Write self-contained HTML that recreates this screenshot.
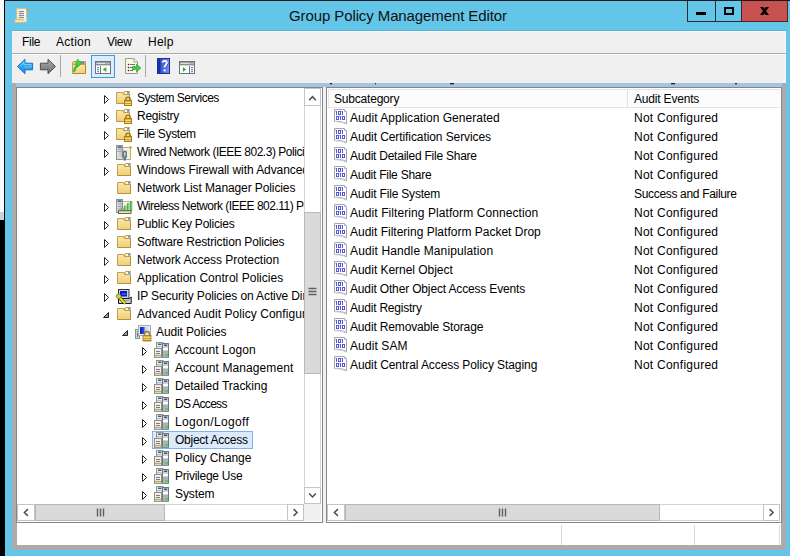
<!DOCTYPE html>
<html><head><meta charset="utf-8">
<style>
*{margin:0;padding:0;box-sizing:border-box}
html,body{width:790px;height:556px;overflow:hidden;background:#000}
body{position:relative;font-family:"Liberation Sans",sans-serif;font-size:12px;color:#000}
.a{position:absolute}
.t{position:absolute;white-space:nowrap;line-height:18px;height:18px}
svg{position:absolute;overflow:visible}
</style></head><body>

<svg width="0" height="0" style="position:absolute">
<defs>
 <linearGradient id="gFold" x1="0" y1="0" x2="0" y2="1"><stop offset="0" stop-color="#fbe7a9"/><stop offset="1" stop-color="#f0cf78"/></linearGradient>
 <linearGradient id="gLock" x1="0" y1="0" x2="0" y2="1"><stop offset="0" stop-color="#e9c04a"/><stop offset="1" stop-color="#b8860b"/></linearGradient>
 <linearGradient id="gScreen" x1="0" y1="0" x2="1" y2="0"><stop offset="0" stop-color="#0a1fc8"/><stop offset="0.45" stop-color="#2a50e0"/><stop offset="0.55" stop-color="#b9d4f4"/><stop offset="1" stop-color="#dce9f8"/></linearGradient>
 <linearGradient id="gCab" x1="0" y1="0" x2="1" y2="0"><stop offset="0" stop-color="#e6e9ec"/><stop offset="1" stop-color="#b8bec4"/></linearGradient>
 </defs></svg>

<!-- outside strip -->
<div class="a" style="left:0;top:0;width:4px;height:212px;background:#f9f9f9"></div>
<div class="a" style="left:0;top:212px;width:4px;height:8px;background:#c5d5db"></div>
<!-- window frame -->
<div class="a" style="left:5px;top:1px;width:785px;height:555px;background:#63c6e8"></div>

<!-- title icon -->
<svg style="left:13px;top:7px" width="16" height="16" viewBox="0 0 16 16">
  <defs><linearGradient id="scr" x1="0" y1="0" x2="1" y2="0"><stop offset="0" stop-color="#f2e8c0"/><stop offset="1" stop-color="#fffbe8"/></linearGradient></defs>
  <path d="M3.5 1.5H14L13.5 2.5V13.5H3.5Z" fill="url(#scr)" stroke="#cdbf96"/>
  <circle cx="14.3" cy="2.4" r="1.3" fill="#d49a50"/>
  <rect x="6" y="4" width="5" height="1.1" fill="#8686b0"/>
  <rect x="6" y="6" width="5" height="1.1" fill="#8686b0"/>
  <rect x="6" y="8" width="5" height="1.1" fill="#8686b0"/>
  <rect x="6" y="10" width="5" height="1.1" fill="#8686b0"/>
  <rect x="1.5" y="12.5" width="10.5" height="3" rx="1.5" fill="#f4e4a4" stroke="#d6c080"/>
  <rect x="11" y="12" width="2.5" height="3" fill="#e8e8ec"/>
</svg>
<div class="t" style="left:289px;top:6px;font-size:15px;line-height:20px;height:20px;color:#111;letter-spacing:-0.1px">Group Policy Management Editor</div>

<!-- caption buttons -->
<div class="a" style="left:687px;top:0;width:101px;height:22px;border:1px solid #2b2b2b;border-top:0;background:#63c6e8"></div>
<div class="a" style="left:715px;top:0;width:1px;height:22px;background:#2b2b2b"></div>
<div class="a" style="left:741px;top:0;width:1px;height:22px;background:#2b2b2b"></div>
<div class="a" style="left:742px;top:0;width:46px;height:22px;background:#c75050;border-right:1px solid #5a2222;border-bottom:1px solid #5a2222"></div>
<div class="a" style="left:696px;top:12px;width:10px;height:3px;background:#000"></div>
<div class="a" style="left:724px;top:7px;width:10px;height:8px;border:2px solid #000"></div>
<svg style="left:760px;top:7px" width="9" height="8" viewBox="0 0 9 8"><path d="M0 0H3.3L4.5 1.5L5.7 0H9L6 4L9 8H5.7L4.5 6.5L3.3 8H0L3 4Z" fill="#000"/></svg>
<div class="a" style="left:4px;top:0;width:786px;height:1px;background:#1a1a1a"></div>

<!-- client -->
<div class="a" style="left:12px;top:31px;width:774px;height:519px;background:#f0f0f0;border-top:1px solid #f9f9f9;border-right:1px solid #f9f9f9"></div>
<div class="a" style="left:11px;top:30px;width:776px;height:1px;background:#58b4d6"></div>
<!-- menu -->
<div class="t" style="left:22px;top:32px;height:20px;line-height:20px;letter-spacing:-0.267px">File</div>
<div class="t" style="left:56px;top:32px;height:20px;line-height:20px;letter-spacing:0.28px">Action</div>
<div class="t" style="left:107px;top:32px;height:20px;line-height:20px;letter-spacing:-0.333px">View</div>
<div class="t" style="left:148px;top:32px;height:20px;line-height:20px;letter-spacing:0.233px">Help</div>
<div class="a" style="left:12px;top:53px;width:774px;height:1px;background:#ababab"></div>
<div class="a" style="left:12px;top:54px;width:774px;height:1px;background:#fafafa"></div>

<!-- toolbar -->

<!-- gray frame around panels -->
<div class="a" style="left:12px;top:83px;width:774px;height:467px;background:#ababab"></div>
<div class="a" style="left:16px;top:83px;width:766px;height:4px;background:#a6c3e0"></div>
<!-- left panel -->
<div class="a" style="left:16px;top:87px;width:307px;height:436px;background:#fff;border:1px solid #828790"></div>
<div class="a" style="left:323px;top:87px;width:3px;height:436px;background:#f0f0f0"></div>
<!-- right panel -->
<div class="a" style="left:326px;top:87px;width:456px;height:436px;background:#fff;border:1px solid #828790"></div>
<!-- status bar -->
<div class="a" style="left:17px;top:523px;width:764px;height:22px;background:#fff"></div>

<!-- list header -->
<div class="a" style="left:327px;top:88px;width:454px;height:19px;background:#fff"></div>
<div class="a" style="left:328px;top:89px;width:452px;height:19px;background:#fcfcfc;border:1px solid #e5e5e5;border-right:0"></div>
<div class="a" style="left:627px;top:90px;width:1px;height:17px;background:#e0e0e0"></div>
<div class="a" style="left:628px;top:90px;width:1px;height:17px;background:#ffffff"></div>
<div class="t" style="left:334px;top:90px;height:19px;line-height:19px;letter-spacing:-0.2px">Subcategory</div>
<div class="t" style="left:634px;top:90px;height:19px;line-height:19px;letter-spacing:-0.182px">Audit Events</div>
<div class="a" style="left:17px;top:88px;width:287px;height:416px;overflow:hidden">
<svg style="left:87px;top:7px" width="6" height="10"><path d="M0.5 0.5L4.5 4.5L0.5 8.5Z" fill="#fff" stroke="#262626"/></svg>
<svg style="left:99px;top:2px" width="16" height="16"><path d="M7.5 2.5L8.5 1.5H13.5V12.5H7.5Z" fill="#e8c878" stroke="#c49d4e"/><rect x="9" y="2" width="4.5" height="2" fill="#fff8e4"/><rect x="11" y="2.1" width="2.2" height="1.7" rx="0.8" fill="#3a8ae8"/><path d="M0.5 2.5H6.5L7.5 4.5H13.5V13.5H0.5Z" fill="url(#gFold)" stroke="#c49d4e"/><path d="M1 13.5H13.5V5" fill="none" stroke="#b8913f"/><path d="M9.8 11V9.5a2.2 2.2 0 0 1 4.4 0V11" fill="none" stroke="#a07c28" stroke-width="1.5"/><rect x="8.5" y="10.5" width="7" height="5" fill="url(#gLock)" stroke="#a87a10"/><rect x="9" y="12" width="6" height="0.9" fill="#f8de88"/><rect x="9" y="14" width="6" height="0.9" fill="#f8de88"/></svg>
<div class="t" style="left:120px;top:1px;letter-spacing:-0.5px">System Services</div>
<svg style="left:87px;top:25px" width="6" height="10"><path d="M0.5 0.5L4.5 4.5L0.5 8.5Z" fill="#fff" stroke="#262626"/></svg>
<svg style="left:99px;top:20px" width="16" height="16"><path d="M7.5 2.5L8.5 1.5H13.5V12.5H7.5Z" fill="#e8c878" stroke="#c49d4e"/><rect x="9" y="2" width="4.5" height="2" fill="#fff8e4"/><rect x="11" y="2.1" width="2.2" height="1.7" rx="0.8" fill="#3a8ae8"/><path d="M0.5 2.5H6.5L7.5 4.5H13.5V13.5H0.5Z" fill="url(#gFold)" stroke="#c49d4e"/><path d="M1 13.5H13.5V5" fill="none" stroke="#b8913f"/><path d="M9.8 11V9.5a2.2 2.2 0 0 1 4.4 0V11" fill="none" stroke="#a07c28" stroke-width="1.5"/><rect x="8.5" y="10.5" width="7" height="5" fill="url(#gLock)" stroke="#a87a10"/><rect x="9" y="12" width="6" height="0.9" fill="#f8de88"/><rect x="9" y="14" width="6" height="0.9" fill="#f8de88"/></svg>
<div class="t" style="left:120px;top:19px;letter-spacing:-0.257px">Registry</div>
<svg style="left:87px;top:43px" width="6" height="10"><path d="M0.5 0.5L4.5 4.5L0.5 8.5Z" fill="#fff" stroke="#262626"/></svg>
<svg style="left:99px;top:38px" width="16" height="16"><path d="M7.5 2.5L8.5 1.5H13.5V12.5H7.5Z" fill="#e8c878" stroke="#c49d4e"/><rect x="9" y="2" width="4.5" height="2" fill="#fff8e4"/><rect x="11" y="2.1" width="2.2" height="1.7" rx="0.8" fill="#3a8ae8"/><path d="M0.5 2.5H6.5L7.5 4.5H13.5V13.5H0.5Z" fill="url(#gFold)" stroke="#c49d4e"/><path d="M1 13.5H13.5V5" fill="none" stroke="#b8913f"/><path d="M9.8 11V9.5a2.2 2.2 0 0 1 4.4 0V11" fill="none" stroke="#a07c28" stroke-width="1.5"/><rect x="8.5" y="10.5" width="7" height="5" fill="url(#gLock)" stroke="#a87a10"/><rect x="9" y="12" width="6" height="0.9" fill="#f8de88"/><rect x="9" y="14" width="6" height="0.9" fill="#f8de88"/></svg>
<div class="t" style="left:120px;top:37px;letter-spacing:-0.36px">File System</div>
<svg style="left:87px;top:61px" width="6" height="10"><path d="M0.5 0.5L4.5 4.5L0.5 8.5Z" fill="#fff" stroke="#262626"/></svg>
<svg style="left:99px;top:56px" width="16" height="16"><rect x="4.5" y="3.5" width="10" height="12" fill="#fbf3cf" stroke="#b9ad86"/><circle cx="14.5" cy="3.5" r="1.3" fill="#c4a24a"/><rect x="0.5" y="1.5" width="6" height="14" fill="url(#gCab)" stroke="#8a9198"/><rect x="1.5" y="2.5" width="4" height="1.2" fill="#1e3c4c"/><rect x="1.5" y="5" width="4" height="1" fill="#9aa2a8"/><rect x="1.5" y="7" width="4" height="1" fill="#9aa2a8"/><rect x="7" y="7" width="3.5" height="7" rx="1" fill="#7a8aa8" stroke="#56647c" stroke-width="0.8"/><rect x="8.2" y="8.5" width="1.2" height="3" fill="#e8ecf4"/><rect x="7.5" y="14" width="2.5" height="2.5" fill="#2f86c8"/><rect x="2.5" y="13" width="4" height="2" fill="#efdc98"/></svg>
<div class="t" style="left:120px;top:55px;letter-spacing:-0.472px">Wired Network (IEEE 802.3) Policies</div>
<svg style="left:87px;top:79px" width="6" height="10"><path d="M0.5 0.5L4.5 4.5L0.5 8.5Z" fill="#fff" stroke="#262626"/></svg>
<svg style="left:100px;top:74px" width="16" height="16"><path d="M7.5 2.5L8.5 1.5H13.5V12.5H7.5Z" fill="#e8c878" stroke="#c49d4e"/><rect x="9" y="2" width="4.5" height="2" fill="#fff8e4"/><rect x="11" y="2.1" width="2.2" height="1.7" rx="0.8" fill="#3a8ae8"/><path d="M0.5 2.5H6.5L7.5 4.5H13.5V13.5H0.5Z" fill="url(#gFold)" stroke="#c49d4e"/><path d="M1 13.5H13.5V5" fill="none" stroke="#b8913f"/></svg>
<div class="t" style="left:120px;top:73px;letter-spacing:-0.071px">Windows Firewall with Advanced Security</div>
<svg style="left:100px;top:92px" width="16" height="16"><path d="M7.5 2.5L8.5 1.5H13.5V12.5H7.5Z" fill="#e8c878" stroke="#c49d4e"/><rect x="9" y="2" width="4.5" height="2" fill="#fff8e4"/><rect x="11" y="2.1" width="2.2" height="1.7" rx="0.8" fill="#3a8ae8"/><path d="M0.5 2.5H6.5L7.5 4.5H13.5V13.5H0.5Z" fill="url(#gFold)" stroke="#c49d4e"/><path d="M1 13.5H13.5V5" fill="none" stroke="#b8913f"/></svg>
<div class="t" style="left:120px;top:91px;letter-spacing:-0.107px">Network List Manager Policies</div>
<svg style="left:87px;top:115px" width="6" height="10"><path d="M0.5 0.5L4.5 4.5L0.5 8.5Z" fill="#fff" stroke="#262626"/></svg>
<svg style="left:99px;top:110px" width="16" height="16"><rect x="4.5" y="3.5" width="10.5" height="11.5" fill="#fbf3cf" stroke="#c2b68c"/><circle cx="15" cy="4" r="1.1" fill="#c4a24a"/><rect x="0.5" y="1.5" width="6" height="13" fill="url(#gCab)" stroke="#8a9198"/><rect x="1.5" y="2.5" width="4" height="1.2" fill="#1e3c4c"/><rect x="1.5" y="5.5" width="4" height="1" fill="#9aa2a8"/><rect x="1.5" y="8" width="4" height="1" fill="#9aa2a8"/><rect x="1.5" y="10.5" width="4" height="1" fill="#9aa2a8"/><g fill="#23a033"><rect x="5.3" y="9.7" width="2.2" height="3"/><rect x="8.2" y="7.7" width="2.2" height="5"/><rect x="11.1" y="5.3" width="2.2" height="7.4"/><rect x="14" y="3.6" width="2.2" height="9.1"/></g><g fill="#bff0c4"><rect x="6.1" y="10.3" width="0.7" height="2"/><rect x="9" y="8.3" width="0.7" height="4"/><rect x="11.9" y="6" width="0.7" height="6.3"/><rect x="14.8" y="4.3" width="0.7" height="8"/></g><rect x="2.5" y="12.8" width="12.5" height="2.6" fill="#f2e2a0" stroke="#333" stroke-width="0.7"/></svg>
<div class="t" style="left:120px;top:109px;letter-spacing:-0.497px">Wireless Network (IEEE 802.11) Policies</div>
<svg style="left:87px;top:133px" width="6" height="10"><path d="M0.5 0.5L4.5 4.5L0.5 8.5Z" fill="#fff" stroke="#262626"/></svg>
<svg style="left:100px;top:128px" width="16" height="16"><path d="M7.5 2.5L8.5 1.5H13.5V12.5H7.5Z" fill="#e8c878" stroke="#c49d4e"/><rect x="9" y="2" width="4.5" height="2" fill="#fff8e4"/><rect x="11" y="2.1" width="2.2" height="1.7" rx="0.8" fill="#3a8ae8"/><path d="M0.5 2.5H6.5L7.5 4.5H13.5V13.5H0.5Z" fill="url(#gFold)" stroke="#c49d4e"/><path d="M1 13.5H13.5V5" fill="none" stroke="#b8913f"/></svg>
<div class="t" style="left:120px;top:127px;letter-spacing:-0.2px">Public Key Policies</div>
<svg style="left:87px;top:151px" width="6" height="10"><path d="M0.5 0.5L4.5 4.5L0.5 8.5Z" fill="#fff" stroke="#262626"/></svg>
<svg style="left:100px;top:146px" width="16" height="16"><path d="M7.5 2.5L8.5 1.5H13.5V12.5H7.5Z" fill="#e8c878" stroke="#c49d4e"/><rect x="9" y="2" width="4.5" height="2" fill="#fff8e4"/><rect x="11" y="2.1" width="2.2" height="1.7" rx="0.8" fill="#3a8ae8"/><path d="M0.5 2.5H6.5L7.5 4.5H13.5V13.5H0.5Z" fill="url(#gFold)" stroke="#c49d4e"/><path d="M1 13.5H13.5V5" fill="none" stroke="#b8913f"/></svg>
<div class="t" style="left:120px;top:145px;letter-spacing:-0.161px">Software Restriction Policies</div>
<svg style="left:87px;top:169px" width="6" height="10"><path d="M0.5 0.5L4.5 4.5L0.5 8.5Z" fill="#fff" stroke="#262626"/></svg>
<svg style="left:100px;top:164px" width="16" height="16"><path d="M7.5 2.5L8.5 1.5H13.5V12.5H7.5Z" fill="#e8c878" stroke="#c49d4e"/><rect x="9" y="2" width="4.5" height="2" fill="#fff8e4"/><rect x="11" y="2.1" width="2.2" height="1.7" rx="0.8" fill="#3a8ae8"/><path d="M0.5 2.5H6.5L7.5 4.5H13.5V13.5H0.5Z" fill="url(#gFold)" stroke="#c49d4e"/><path d="M1 13.5H13.5V5" fill="none" stroke="#b8913f"/></svg>
<div class="t" style="left:120px;top:163px;letter-spacing:-0.025px">Network Access Protection</div>
<svg style="left:87px;top:187px" width="6" height="10"><path d="M0.5 0.5L4.5 4.5L0.5 8.5Z" fill="#fff" stroke="#262626"/></svg>
<svg style="left:100px;top:182px" width="16" height="16"><path d="M7.5 2.5L8.5 1.5H13.5V12.5H7.5Z" fill="#e8c878" stroke="#c49d4e"/><rect x="9" y="2" width="4.5" height="2" fill="#fff8e4"/><rect x="11" y="2.1" width="2.2" height="1.7" rx="0.8" fill="#3a8ae8"/><path d="M0.5 2.5H6.5L7.5 4.5H13.5V13.5H0.5Z" fill="url(#gFold)" stroke="#c49d4e"/><path d="M1 13.5H13.5V5" fill="none" stroke="#b8913f"/></svg>
<div class="t" style="left:120px;top:181px;letter-spacing:0.03px">Application Control Policies</div>
<svg style="left:87px;top:205px" width="6" height="10"><path d="M0.5 0.5L4.5 4.5L0.5 8.5Z" fill="#fff" stroke="#262626"/></svg>
<svg style="left:99px;top:200px" width="16" height="16"><rect x="2.5" y="1.5" width="10.5" height="9" fill="#d2d2d2" stroke="#303030"/><rect x="12" y="2" width="1" height="8" fill="#8a8a8a"/><rect x="4" y="3" width="7" height="5.5" fill="#0a12e8"/><rect x="6" y="5.5" width="4.5" height="1" fill="#30b0a8"/><path d="M2.5 10.5H13.5L15.2 9V15.5H2.5Z" fill="#cdcdcd" stroke="#161616"/><rect x="3.5" y="12" width="9.5" height="1" fill="#9a9a9a"/><path d="M2.5 8.5L9.3 15.5" stroke="#2a2a00" stroke-width="3"/><path d="M2.5 8.5L9.3 15.5" stroke="#f2ea10" stroke-width="1.8"/><ellipse cx="2.6" cy="8.2" rx="2.4" ry="2.2" fill="#f2ea10" stroke="#6a6400" stroke-width="0.7"/><ellipse cx="2.4" cy="8" rx="0.9" ry="0.8" fill="#9090c0"/></svg>
<div class="t" style="left:120px;top:199px;letter-spacing:-0.114px">IP Security Policies on Active Directory (CORP.LOCAL)</div>
<svg style="left:86px;top:224px" width="7" height="7"><path d="M5.5 0.5V5.5H0.5Z" fill="#9a9a9a" stroke="#262626"/></svg>
<svg style="left:100px;top:218px" width="16" height="16"><path d="M7.5 2.5L8.5 1.5H13.5V12.5H7.5Z" fill="#e8c878" stroke="#c49d4e"/><rect x="9" y="2" width="4.5" height="2" fill="#fff8e4"/><rect x="11" y="2.1" width="2.2" height="1.7" rx="0.8" fill="#3a8ae8"/><path d="M0.5 2.5H6.5L7.5 4.5H13.5V13.5H0.5Z" fill="url(#gFold)" stroke="#c49d4e"/><path d="M1 13.5H13.5V5" fill="none" stroke="#b8913f"/></svg>
<div class="t" style="left:120px;top:217px;letter-spacing:0.05px">Advanced Audit Policy Configuration</div>
<svg style="left:105px;top:242px" width="7" height="7"><path d="M5.5 0.5V5.5H0.5Z" fill="#9a9a9a" stroke="#262626"/></svg>
<svg style="left:118px;top:236px" width="16" height="16"><rect x="0.5" y="5.5" width="4" height="9" fill="#d4d7da" stroke="#8d9296"/><rect x="1.5" y="7" width="2" height="1.2" fill="#34d834"/><rect x="2" y="9" width="1" height="4" fill="#6c7276"/><rect x="3.5" y="1.5" width="12" height="10" fill="#e6e8ea" stroke="#a9adb1"/><rect x="5" y="3" width="9" height="7" fill="url(#gScreen)"/><path d="M9.5 12v-2a2.5 2.5 0 0 1 5 0v2" fill="none" stroke="#9b7a2a" stroke-width="1.3"/><rect x="8" y="11.5" width="8" height="5.5" fill="url(#gLock)" stroke="#a57a14" stroke-width="0.8"/><rect x="8.5" y="13" width="7" height="0.8" fill="#f6dc86"/><rect x="8.5" y="15" width="7" height="0.8" fill="#f6dc86"/></svg>
<div class="t" style="left:139px;top:235px;letter-spacing:-0.123px">Audit Policies</div>
<svg style="left:125px;top:259px" width="6" height="10"><path d="M0.5 0.5L4.5 4.5L0.5 8.5Z" fill="#fff" stroke="#262626"/></svg>
<svg style="left:137px;top:254px" width="16" height="16"><rect x="2.5" y="0.5" width="6.5" height="9" fill="#e6ecef" stroke="#8c949a"/><rect x="4" y="1.6" width="3.5" height="1.2" fill="#1f3f50"/><rect x="3" y="4.4" width="5.5" height="0.8" fill="#9aa3aa"/><rect x="8.5" y="1.5" width="6" height="13.8" fill="#c9d0d6" stroke="#6f777e"/><rect x="10" y="2.6" width="3.2" height="1.2" fill="#1f3f50"/><rect x="9" y="6" width="5" height="2" fill="#fafcfc"/><rect x="9" y="9" width="5" height="5.8" fill="#a9b2ba"/><rect x="11.6" y="12" width="2.2" height="2.2" fill="#2ee02e"/><rect x="0.5" y="6.5" width="7" height="9" fill="#fcf1c4" stroke="#8f8f8f"/><rect x="2" y="9" width="4" height="1" fill="#7470c4"/><rect x="2" y="11" width="4" height="1" fill="#7470c4"/><rect x="0.5" y="13.3" width="7" height="2.2" fill="#ecd99a" stroke="#8f8f8f" stroke-width="0.8"/></svg>
<div class="t" style="left:158px;top:253px;letter-spacing:0.042px">Account Logon</div>
<svg style="left:125px;top:277px" width="6" height="10"><path d="M0.5 0.5L4.5 4.5L0.5 8.5Z" fill="#fff" stroke="#262626"/></svg>
<svg style="left:137px;top:272px" width="16" height="16"><rect x="2.5" y="0.5" width="6.5" height="9" fill="#e6ecef" stroke="#8c949a"/><rect x="4" y="1.6" width="3.5" height="1.2" fill="#1f3f50"/><rect x="3" y="4.4" width="5.5" height="0.8" fill="#9aa3aa"/><rect x="8.5" y="1.5" width="6" height="13.8" fill="#c9d0d6" stroke="#6f777e"/><rect x="10" y="2.6" width="3.2" height="1.2" fill="#1f3f50"/><rect x="9" y="6" width="5" height="2" fill="#fafcfc"/><rect x="9" y="9" width="5" height="5.8" fill="#a9b2ba"/><rect x="11.6" y="12" width="2.2" height="2.2" fill="#2ee02e"/><rect x="0.5" y="6.5" width="7" height="9" fill="#fcf1c4" stroke="#8f8f8f"/><rect x="2" y="9" width="4" height="1" fill="#7470c4"/><rect x="2" y="11" width="4" height="1" fill="#7470c4"/><rect x="0.5" y="13.3" width="7" height="2.2" fill="#ecd99a" stroke="#8f8f8f" stroke-width="0.8"/></svg>
<div class="t" style="left:158px;top:271px;letter-spacing:0.094px">Account Management</div>
<svg style="left:125px;top:295px" width="6" height="10"><path d="M0.5 0.5L4.5 4.5L0.5 8.5Z" fill="#fff" stroke="#262626"/></svg>
<svg style="left:137px;top:290px" width="16" height="16"><rect x="2.5" y="0.5" width="6.5" height="9" fill="#e6ecef" stroke="#8c949a"/><rect x="4" y="1.6" width="3.5" height="1.2" fill="#1f3f50"/><rect x="3" y="4.4" width="5.5" height="0.8" fill="#9aa3aa"/><rect x="8.5" y="1.5" width="6" height="13.8" fill="#c9d0d6" stroke="#6f777e"/><rect x="10" y="2.6" width="3.2" height="1.2" fill="#1f3f50"/><rect x="9" y="6" width="5" height="2" fill="#fafcfc"/><rect x="9" y="9" width="5" height="5.8" fill="#a9b2ba"/><rect x="11.6" y="12" width="2.2" height="2.2" fill="#2ee02e"/><rect x="0.5" y="6.5" width="7" height="9" fill="#fcf1c4" stroke="#8f8f8f"/><rect x="2" y="9" width="4" height="1" fill="#7470c4"/><rect x="2" y="11" width="4" height="1" fill="#7470c4"/><rect x="0.5" y="13.3" width="7" height="2.2" fill="#ecd99a" stroke="#8f8f8f" stroke-width="0.8"/></svg>
<div class="t" style="left:158px;top:289px;letter-spacing:-0.025px">Detailed Tracking</div>
<svg style="left:125px;top:313px" width="6" height="10"><path d="M0.5 0.5L4.5 4.5L0.5 8.5Z" fill="#fff" stroke="#262626"/></svg>
<svg style="left:137px;top:308px" width="16" height="16"><rect x="2.5" y="0.5" width="6.5" height="9" fill="#e6ecef" stroke="#8c949a"/><rect x="4" y="1.6" width="3.5" height="1.2" fill="#1f3f50"/><rect x="3" y="4.4" width="5.5" height="0.8" fill="#9aa3aa"/><rect x="8.5" y="1.5" width="6" height="13.8" fill="#c9d0d6" stroke="#6f777e"/><rect x="10" y="2.6" width="3.2" height="1.2" fill="#1f3f50"/><rect x="9" y="6" width="5" height="2" fill="#fafcfc"/><rect x="9" y="9" width="5" height="5.8" fill="#a9b2ba"/><rect x="11.6" y="12" width="2.2" height="2.2" fill="#2ee02e"/><rect x="0.5" y="6.5" width="7" height="9" fill="#fcf1c4" stroke="#8f8f8f"/><rect x="2" y="9" width="4" height="1" fill="#7470c4"/><rect x="2" y="11" width="4" height="1" fill="#7470c4"/><rect x="0.5" y="13.3" width="7" height="2.2" fill="#ecd99a" stroke="#8f8f8f" stroke-width="0.8"/></svg>
<div class="t" style="left:158px;top:307px;letter-spacing:-0.7px">DS Access</div>
<svg style="left:125px;top:331px" width="6" height="10"><path d="M0.5 0.5L4.5 4.5L0.5 8.5Z" fill="#fff" stroke="#262626"/></svg>
<svg style="left:137px;top:326px" width="16" height="16"><rect x="2.5" y="0.5" width="6.5" height="9" fill="#e6ecef" stroke="#8c949a"/><rect x="4" y="1.6" width="3.5" height="1.2" fill="#1f3f50"/><rect x="3" y="4.4" width="5.5" height="0.8" fill="#9aa3aa"/><rect x="8.5" y="1.5" width="6" height="13.8" fill="#c9d0d6" stroke="#6f777e"/><rect x="10" y="2.6" width="3.2" height="1.2" fill="#1f3f50"/><rect x="9" y="6" width="5" height="2" fill="#fafcfc"/><rect x="9" y="9" width="5" height="5.8" fill="#a9b2ba"/><rect x="11.6" y="12" width="2.2" height="2.2" fill="#2ee02e"/><rect x="0.5" y="6.5" width="7" height="9" fill="#fcf1c4" stroke="#8f8f8f"/><rect x="2" y="9" width="4" height="1" fill="#7470c4"/><rect x="2" y="11" width="4" height="1" fill="#7470c4"/><rect x="0.5" y="13.3" width="7" height="2.2" fill="#ecd99a" stroke="#8f8f8f" stroke-width="0.8"/></svg>
<div class="t" style="left:158px;top:325px;letter-spacing:0.364px">Logon/Logoff</div>
<div class="a" style="left:135px;top:343px;width:101px;height:18px;background:#dcebfc;border:1px solid #7eb4ea"></div>
<svg style="left:125px;top:349px" width="6" height="10"><path d="M0.5 0.5L4.5 4.5L0.5 8.5Z" fill="#fff" stroke="#262626"/></svg>
<svg style="left:137px;top:344px" width="16" height="16"><rect x="2.5" y="0.5" width="6.5" height="9" fill="#e6ecef" stroke="#8c949a"/><rect x="4" y="1.6" width="3.5" height="1.2" fill="#1f3f50"/><rect x="3" y="4.4" width="5.5" height="0.8" fill="#9aa3aa"/><rect x="8.5" y="1.5" width="6" height="13.8" fill="#c9d0d6" stroke="#6f777e"/><rect x="10" y="2.6" width="3.2" height="1.2" fill="#1f3f50"/><rect x="9" y="6" width="5" height="2" fill="#fafcfc"/><rect x="9" y="9" width="5" height="5.8" fill="#a9b2ba"/><rect x="11.6" y="12" width="2.2" height="2.2" fill="#2ee02e"/><rect x="0.5" y="6.5" width="7" height="9" fill="#fcf1c4" stroke="#8f8f8f"/><rect x="2" y="9" width="4" height="1" fill="#7470c4"/><rect x="2" y="11" width="4" height="1" fill="#7470c4"/><rect x="0.5" y="13.3" width="7" height="2.2" fill="#ecd99a" stroke="#8f8f8f" stroke-width="0.8"/></svg>
<div class="t" style="left:158px;top:343px;letter-spacing:-0.25px">Object Access</div>
<svg style="left:125px;top:367px" width="6" height="10"><path d="M0.5 0.5L4.5 4.5L0.5 8.5Z" fill="#fff" stroke="#262626"/></svg>
<svg style="left:137px;top:362px" width="16" height="16"><rect x="2.5" y="0.5" width="6.5" height="9" fill="#e6ecef" stroke="#8c949a"/><rect x="4" y="1.6" width="3.5" height="1.2" fill="#1f3f50"/><rect x="3" y="4.4" width="5.5" height="0.8" fill="#9aa3aa"/><rect x="8.5" y="1.5" width="6" height="13.8" fill="#c9d0d6" stroke="#6f777e"/><rect x="10" y="2.6" width="3.2" height="1.2" fill="#1f3f50"/><rect x="9" y="6" width="5" height="2" fill="#fafcfc"/><rect x="9" y="9" width="5" height="5.8" fill="#a9b2ba"/><rect x="11.6" y="12" width="2.2" height="2.2" fill="#2ee02e"/><rect x="0.5" y="6.5" width="7" height="9" fill="#fcf1c4" stroke="#8f8f8f"/><rect x="2" y="9" width="4" height="1" fill="#7470c4"/><rect x="2" y="11" width="4" height="1" fill="#7470c4"/><rect x="0.5" y="13.3" width="7" height="2.2" fill="#ecd99a" stroke="#8f8f8f" stroke-width="0.8"/></svg>
<div class="t" style="left:158px;top:361px;letter-spacing:-0.083px">Policy Change</div>
<svg style="left:125px;top:385px" width="6" height="10"><path d="M0.5 0.5L4.5 4.5L0.5 8.5Z" fill="#fff" stroke="#262626"/></svg>
<svg style="left:137px;top:380px" width="16" height="16"><rect x="2.5" y="0.5" width="6.5" height="9" fill="#e6ecef" stroke="#8c949a"/><rect x="4" y="1.6" width="3.5" height="1.2" fill="#1f3f50"/><rect x="3" y="4.4" width="5.5" height="0.8" fill="#9aa3aa"/><rect x="8.5" y="1.5" width="6" height="13.8" fill="#c9d0d6" stroke="#6f777e"/><rect x="10" y="2.6" width="3.2" height="1.2" fill="#1f3f50"/><rect x="9" y="6" width="5" height="2" fill="#fafcfc"/><rect x="9" y="9" width="5" height="5.8" fill="#a9b2ba"/><rect x="11.6" y="12" width="2.2" height="2.2" fill="#2ee02e"/><rect x="0.5" y="6.5" width="7" height="9" fill="#fcf1c4" stroke="#8f8f8f"/><rect x="2" y="9" width="4" height="1" fill="#7470c4"/><rect x="2" y="11" width="4" height="1" fill="#7470c4"/><rect x="0.5" y="13.3" width="7" height="2.2" fill="#ecd99a" stroke="#8f8f8f" stroke-width="0.8"/></svg>
<div class="t" style="left:158px;top:379px;letter-spacing:-0.25px">Privilege Use</div>
<svg style="left:125px;top:403px" width="6" height="10"><path d="M0.5 0.5L4.5 4.5L0.5 8.5Z" fill="#fff" stroke="#262626"/></svg>
<svg style="left:137px;top:398px" width="16" height="16"><rect x="2.5" y="0.5" width="6.5" height="9" fill="#e6ecef" stroke="#8c949a"/><rect x="4" y="1.6" width="3.5" height="1.2" fill="#1f3f50"/><rect x="3" y="4.4" width="5.5" height="0.8" fill="#9aa3aa"/><rect x="8.5" y="1.5" width="6" height="13.8" fill="#c9d0d6" stroke="#6f777e"/><rect x="10" y="2.6" width="3.2" height="1.2" fill="#1f3f50"/><rect x="9" y="6" width="5" height="2" fill="#fafcfc"/><rect x="9" y="9" width="5" height="5.8" fill="#a9b2ba"/><rect x="11.6" y="12" width="2.2" height="2.2" fill="#2ee02e"/><rect x="0.5" y="6.5" width="7" height="9" fill="#fcf1c4" stroke="#8f8f8f"/><rect x="2" y="9" width="4" height="1" fill="#7470c4"/><rect x="2" y="11" width="4" height="1" fill="#7470c4"/><rect x="0.5" y="13.3" width="7" height="2.2" fill="#ecd99a" stroke="#8f8f8f" stroke-width="0.8"/></svg>
<div class="t" style="left:158px;top:397px;letter-spacing:-0.1px">System</div>
</div>
<svg style="left:334px;top:109px" width="16" height="16"><path d="M0.5 0.5H10.5L12.5 2.5V14.8L11 13.8L9 13.2L6 12.6L3 12.3L0.5 12.6Z" fill="#ffffff" stroke="#a6a6a6"/><path d="M10.5 0.5V2.5H12.5" fill="#eeeeee" stroke="#b4b4b4"/><path d="M1 12.6L3 12.8L6 13.1L9 13.7L12 15.2" fill="none" stroke="#d0d0d0"/><g fill="#5656dc"><rect x="2" y="2" width="1" height="4"/><rect x="1.5" y="2.2" width="0.6" height="0.8"/><path d="M4 2h3v4h-3zM5 3v2h1v-2z" fill-rule="evenodd"/><rect x="8" y="2" width="1" height="4"/><rect x="7.5" y="2.2" width="0.6" height="0.8"/><path d="M2 7h3v4h-3zM3 8v2h1v-2z" fill-rule="evenodd"/><rect x="6" y="7" width="1" height="4"/><rect x="5.5" y="7.2" width="0.6" height="0.8"/><path d="M8 7h3v4h-3zM9 8v2h1v-2z" fill-rule="evenodd"/></g></svg>
<div class="t" style="left:350px;top:109px;line-height:19px;height:19px;letter-spacing:0.038px">Audit Application Generated</div>
<div class="t" style="left:634px;top:109px;line-height:19px;height:19px;letter-spacing:0.254px">Not Configured</div>
<svg style="left:334px;top:128px" width="16" height="16"><path d="M0.5 0.5H10.5L12.5 2.5V14.8L11 13.8L9 13.2L6 12.6L3 12.3L0.5 12.6Z" fill="#ffffff" stroke="#a6a6a6"/><path d="M10.5 0.5V2.5H12.5" fill="#eeeeee" stroke="#b4b4b4"/><path d="M1 12.6L3 12.8L6 13.1L9 13.7L12 15.2" fill="none" stroke="#d0d0d0"/><g fill="#5656dc"><rect x="2" y="2" width="1" height="4"/><rect x="1.5" y="2.2" width="0.6" height="0.8"/><path d="M4 2h3v4h-3zM5 3v2h1v-2z" fill-rule="evenodd"/><rect x="8" y="2" width="1" height="4"/><rect x="7.5" y="2.2" width="0.6" height="0.8"/><path d="M2 7h3v4h-3zM3 8v2h1v-2z" fill-rule="evenodd"/><rect x="6" y="7" width="1" height="4"/><rect x="5.5" y="7.2" width="0.6" height="0.8"/><path d="M8 7h3v4h-3zM9 8v2h1v-2z" fill-rule="evenodd"/></g></svg>
<div class="t" style="left:350px;top:128px;line-height:19px;height:19px;letter-spacing:-0.085px">Audit Certification Services</div>
<div class="t" style="left:634px;top:128px;line-height:19px;height:19px;letter-spacing:0.254px">Not Configured</div>
<svg style="left:334px;top:147px" width="16" height="16"><path d="M0.5 0.5H10.5L12.5 2.5V14.8L11 13.8L9 13.2L6 12.6L3 12.3L0.5 12.6Z" fill="#ffffff" stroke="#a6a6a6"/><path d="M10.5 0.5V2.5H12.5" fill="#eeeeee" stroke="#b4b4b4"/><path d="M1 12.6L3 12.8L6 13.1L9 13.7L12 15.2" fill="none" stroke="#d0d0d0"/><g fill="#5656dc"><rect x="2" y="2" width="1" height="4"/><rect x="1.5" y="2.2" width="0.6" height="0.8"/><path d="M4 2h3v4h-3zM5 3v2h1v-2z" fill-rule="evenodd"/><rect x="8" y="2" width="1" height="4"/><rect x="7.5" y="2.2" width="0.6" height="0.8"/><path d="M2 7h3v4h-3zM3 8v2h1v-2z" fill-rule="evenodd"/><rect x="6" y="7" width="1" height="4"/><rect x="5.5" y="7.2" width="0.6" height="0.8"/><path d="M8 7h3v4h-3zM9 8v2h1v-2z" fill-rule="evenodd"/></g></svg>
<div class="t" style="left:350px;top:147px;line-height:19px;height:19px;letter-spacing:-0.238px">Audit Detailed File Share</div>
<div class="t" style="left:634px;top:147px;line-height:19px;height:19px;letter-spacing:0.254px">Not Configured</div>
<svg style="left:334px;top:166px" width="16" height="16"><path d="M0.5 0.5H10.5L12.5 2.5V14.8L11 13.8L9 13.2L6 12.6L3 12.3L0.5 12.6Z" fill="#ffffff" stroke="#a6a6a6"/><path d="M10.5 0.5V2.5H12.5" fill="#eeeeee" stroke="#b4b4b4"/><path d="M1 12.6L3 12.8L6 13.1L9 13.7L12 15.2" fill="none" stroke="#d0d0d0"/><g fill="#5656dc"><rect x="2" y="2" width="1" height="4"/><rect x="1.5" y="2.2" width="0.6" height="0.8"/><path d="M4 2h3v4h-3zM5 3v2h1v-2z" fill-rule="evenodd"/><rect x="8" y="2" width="1" height="4"/><rect x="7.5" y="2.2" width="0.6" height="0.8"/><path d="M2 7h3v4h-3zM3 8v2h1v-2z" fill-rule="evenodd"/><rect x="6" y="7" width="1" height="4"/><rect x="5.5" y="7.2" width="0.6" height="0.8"/><path d="M8 7h3v4h-3zM9 8v2h1v-2z" fill-rule="evenodd"/></g></svg>
<div class="t" style="left:350px;top:166px;line-height:19px;height:19px;letter-spacing:-0.247px">Audit File Share</div>
<div class="t" style="left:634px;top:166px;line-height:19px;height:19px;letter-spacing:0.254px">Not Configured</div>
<svg style="left:334px;top:185px" width="16" height="16"><path d="M0.5 0.5H10.5L12.5 2.5V14.8L11 13.8L9 13.2L6 12.6L3 12.3L0.5 12.6Z" fill="#ffffff" stroke="#a6a6a6"/><path d="M10.5 0.5V2.5H12.5" fill="#eeeeee" stroke="#b4b4b4"/><path d="M1 12.6L3 12.8L6 13.1L9 13.7L12 15.2" fill="none" stroke="#d0d0d0"/><g fill="#5656dc"><rect x="2" y="2" width="1" height="4"/><rect x="1.5" y="2.2" width="0.6" height="0.8"/><path d="M4 2h3v4h-3zM5 3v2h1v-2z" fill-rule="evenodd"/><rect x="8" y="2" width="1" height="4"/><rect x="7.5" y="2.2" width="0.6" height="0.8"/><path d="M2 7h3v4h-3zM3 8v2h1v-2z" fill-rule="evenodd"/><rect x="6" y="7" width="1" height="4"/><rect x="5.5" y="7.2" width="0.6" height="0.8"/><path d="M8 7h3v4h-3zM9 8v2h1v-2z" fill-rule="evenodd"/></g></svg>
<div class="t" style="left:350px;top:185px;line-height:19px;height:19px;letter-spacing:-0.188px">Audit File System</div>
<div class="t" style="left:634px;top:185px;line-height:19px;height:19px;letter-spacing:-0.322px">Success and Failure</div>
<svg style="left:334px;top:204px" width="16" height="16"><path d="M0.5 0.5H10.5L12.5 2.5V14.8L11 13.8L9 13.2L6 12.6L3 12.3L0.5 12.6Z" fill="#ffffff" stroke="#a6a6a6"/><path d="M10.5 0.5V2.5H12.5" fill="#eeeeee" stroke="#b4b4b4"/><path d="M1 12.6L3 12.8L6 13.1L9 13.7L12 15.2" fill="none" stroke="#d0d0d0"/><g fill="#5656dc"><rect x="2" y="2" width="1" height="4"/><rect x="1.5" y="2.2" width="0.6" height="0.8"/><path d="M4 2h3v4h-3zM5 3v2h1v-2z" fill-rule="evenodd"/><rect x="8" y="2" width="1" height="4"/><rect x="7.5" y="2.2" width="0.6" height="0.8"/><path d="M2 7h3v4h-3zM3 8v2h1v-2z" fill-rule="evenodd"/><rect x="6" y="7" width="1" height="4"/><rect x="5.5" y="7.2" width="0.6" height="0.8"/><path d="M8 7h3v4h-3zM9 8v2h1v-2z" fill-rule="evenodd"/></g></svg>
<div class="t" style="left:350px;top:204px;line-height:19px;height:19px;letter-spacing:0.079px">Audit Filtering Platform Connection</div>
<div class="t" style="left:634px;top:204px;line-height:19px;height:19px;letter-spacing:0.254px">Not Configured</div>
<svg style="left:334px;top:223px" width="16" height="16"><path d="M0.5 0.5H10.5L12.5 2.5V14.8L11 13.8L9 13.2L6 12.6L3 12.3L0.5 12.6Z" fill="#ffffff" stroke="#a6a6a6"/><path d="M10.5 0.5V2.5H12.5" fill="#eeeeee" stroke="#b4b4b4"/><path d="M1 12.6L3 12.8L6 13.1L9 13.7L12 15.2" fill="none" stroke="#d0d0d0"/><g fill="#5656dc"><rect x="2" y="2" width="1" height="4"/><rect x="1.5" y="2.2" width="0.6" height="0.8"/><path d="M4 2h3v4h-3zM5 3v2h1v-2z" fill-rule="evenodd"/><rect x="8" y="2" width="1" height="4"/><rect x="7.5" y="2.2" width="0.6" height="0.8"/><path d="M2 7h3v4h-3zM3 8v2h1v-2z" fill-rule="evenodd"/><rect x="6" y="7" width="1" height="4"/><rect x="5.5" y="7.2" width="0.6" height="0.8"/><path d="M8 7h3v4h-3zM9 8v2h1v-2z" fill-rule="evenodd"/></g></svg>
<div class="t" style="left:350px;top:223px;line-height:19px;height:19px;letter-spacing:0.0px">Audit Filtering Platform Packet Drop</div>
<div class="t" style="left:634px;top:223px;line-height:19px;height:19px;letter-spacing:0.254px">Not Configured</div>
<svg style="left:334px;top:242px" width="16" height="16"><path d="M0.5 0.5H10.5L12.5 2.5V14.8L11 13.8L9 13.2L6 12.6L3 12.3L0.5 12.6Z" fill="#ffffff" stroke="#a6a6a6"/><path d="M10.5 0.5V2.5H12.5" fill="#eeeeee" stroke="#b4b4b4"/><path d="M1 12.6L3 12.8L6 13.1L9 13.7L12 15.2" fill="none" stroke="#d0d0d0"/><g fill="#5656dc"><rect x="2" y="2" width="1" height="4"/><rect x="1.5" y="2.2" width="0.6" height="0.8"/><path d="M4 2h3v4h-3zM5 3v2h1v-2z" fill-rule="evenodd"/><rect x="8" y="2" width="1" height="4"/><rect x="7.5" y="2.2" width="0.6" height="0.8"/><path d="M2 7h3v4h-3zM3 8v2h1v-2z" fill-rule="evenodd"/><rect x="6" y="7" width="1" height="4"/><rect x="5.5" y="7.2" width="0.6" height="0.8"/><path d="M8 7h3v4h-3zM9 8v2h1v-2z" fill-rule="evenodd"/></g></svg>
<div class="t" style="left:350px;top:242px;line-height:19px;height:19px;letter-spacing:0.125px">Audit Handle Manipulation</div>
<div class="t" style="left:634px;top:242px;line-height:19px;height:19px;letter-spacing:0.254px">Not Configured</div>
<svg style="left:334px;top:261px" width="16" height="16"><path d="M0.5 0.5H10.5L12.5 2.5V14.8L11 13.8L9 13.2L6 12.6L3 12.3L0.5 12.6Z" fill="#ffffff" stroke="#a6a6a6"/><path d="M10.5 0.5V2.5H12.5" fill="#eeeeee" stroke="#b4b4b4"/><path d="M1 12.6L3 12.8L6 13.1L9 13.7L12 15.2" fill="none" stroke="#d0d0d0"/><g fill="#5656dc"><rect x="2" y="2" width="1" height="4"/><rect x="1.5" y="2.2" width="0.6" height="0.8"/><path d="M4 2h3v4h-3zM5 3v2h1v-2z" fill-rule="evenodd"/><rect x="8" y="2" width="1" height="4"/><rect x="7.5" y="2.2" width="0.6" height="0.8"/><path d="M2 7h3v4h-3zM3 8v2h1v-2z" fill-rule="evenodd"/><rect x="6" y="7" width="1" height="4"/><rect x="5.5" y="7.2" width="0.6" height="0.8"/><path d="M8 7h3v4h-3zM9 8v2h1v-2z" fill-rule="evenodd"/></g></svg>
<div class="t" style="left:350px;top:261px;line-height:19px;height:19px;letter-spacing:-0.033px">Audit Kernel Object</div>
<div class="t" style="left:634px;top:261px;line-height:19px;height:19px;letter-spacing:0.254px">Not Configured</div>
<svg style="left:334px;top:280px" width="16" height="16"><path d="M0.5 0.5H10.5L12.5 2.5V14.8L11 13.8L9 13.2L6 12.6L3 12.3L0.5 12.6Z" fill="#ffffff" stroke="#a6a6a6"/><path d="M10.5 0.5V2.5H12.5" fill="#eeeeee" stroke="#b4b4b4"/><path d="M1 12.6L3 12.8L6 13.1L9 13.7L12 15.2" fill="none" stroke="#d0d0d0"/><g fill="#5656dc"><rect x="2" y="2" width="1" height="4"/><rect x="1.5" y="2.2" width="0.6" height="0.8"/><path d="M4 2h3v4h-3zM5 3v2h1v-2z" fill-rule="evenodd"/><rect x="8" y="2" width="1" height="4"/><rect x="7.5" y="2.2" width="0.6" height="0.8"/><path d="M2 7h3v4h-3zM3 8v2h1v-2z" fill-rule="evenodd"/><rect x="6" y="7" width="1" height="4"/><rect x="5.5" y="7.2" width="0.6" height="0.8"/><path d="M8 7h3v4h-3zM9 8v2h1v-2z" fill-rule="evenodd"/></g></svg>
<div class="t" style="left:350px;top:280px;line-height:19px;height:19px;letter-spacing:-0.155px">Audit Other Object Access Events</div>
<div class="t" style="left:634px;top:280px;line-height:19px;height:19px;letter-spacing:0.254px">Not Configured</div>
<svg style="left:334px;top:299px" width="16" height="16"><path d="M0.5 0.5H10.5L12.5 2.5V14.8L11 13.8L9 13.2L6 12.6L3 12.3L0.5 12.6Z" fill="#ffffff" stroke="#a6a6a6"/><path d="M10.5 0.5V2.5H12.5" fill="#eeeeee" stroke="#b4b4b4"/><path d="M1 12.6L3 12.8L6 13.1L9 13.7L12 15.2" fill="none" stroke="#d0d0d0"/><g fill="#5656dc"><rect x="2" y="2" width="1" height="4"/><rect x="1.5" y="2.2" width="0.6" height="0.8"/><path d="M4 2h3v4h-3zM5 3v2h1v-2z" fill-rule="evenodd"/><rect x="8" y="2" width="1" height="4"/><rect x="7.5" y="2.2" width="0.6" height="0.8"/><path d="M2 7h3v4h-3zM3 8v2h1v-2z" fill-rule="evenodd"/><rect x="6" y="7" width="1" height="4"/><rect x="5.5" y="7.2" width="0.6" height="0.8"/><path d="M8 7h3v4h-3zM9 8v2h1v-2z" fill-rule="evenodd"/></g></svg>
<div class="t" style="left:350px;top:299px;line-height:19px;height:19px;letter-spacing:-0.215px">Audit Registry</div>
<div class="t" style="left:634px;top:299px;line-height:19px;height:19px;letter-spacing:0.254px">Not Configured</div>
<svg style="left:334px;top:318px" width="16" height="16"><path d="M0.5 0.5H10.5L12.5 2.5V14.8L11 13.8L9 13.2L6 12.6L3 12.3L0.5 12.6Z" fill="#ffffff" stroke="#a6a6a6"/><path d="M10.5 0.5V2.5H12.5" fill="#eeeeee" stroke="#b4b4b4"/><path d="M1 12.6L3 12.8L6 13.1L9 13.7L12 15.2" fill="none" stroke="#d0d0d0"/><g fill="#5656dc"><rect x="2" y="2" width="1" height="4"/><rect x="1.5" y="2.2" width="0.6" height="0.8"/><path d="M4 2h3v4h-3zM5 3v2h1v-2z" fill-rule="evenodd"/><rect x="8" y="2" width="1" height="4"/><rect x="7.5" y="2.2" width="0.6" height="0.8"/><path d="M2 7h3v4h-3zM3 8v2h1v-2z" fill-rule="evenodd"/><rect x="6" y="7" width="1" height="4"/><rect x="5.5" y="7.2" width="0.6" height="0.8"/><path d="M8 7h3v4h-3zM9 8v2h1v-2z" fill-rule="evenodd"/></g></svg>
<div class="t" style="left:350px;top:318px;line-height:19px;height:19px;letter-spacing:-0.155px">Audit Removable Storage</div>
<div class="t" style="left:634px;top:318px;line-height:19px;height:19px;letter-spacing:0.254px">Not Configured</div>
<svg style="left:334px;top:337px" width="16" height="16"><path d="M0.5 0.5H10.5L12.5 2.5V14.8L11 13.8L9 13.2L6 12.6L3 12.3L0.5 12.6Z" fill="#ffffff" stroke="#a6a6a6"/><path d="M10.5 0.5V2.5H12.5" fill="#eeeeee" stroke="#b4b4b4"/><path d="M1 12.6L3 12.8L6 13.1L9 13.7L12 15.2" fill="none" stroke="#d0d0d0"/><g fill="#5656dc"><rect x="2" y="2" width="1" height="4"/><rect x="1.5" y="2.2" width="0.6" height="0.8"/><path d="M4 2h3v4h-3zM5 3v2h1v-2z" fill-rule="evenodd"/><rect x="8" y="2" width="1" height="4"/><rect x="7.5" y="2.2" width="0.6" height="0.8"/><path d="M2 7h3v4h-3zM3 8v2h1v-2z" fill-rule="evenodd"/><rect x="6" y="7" width="1" height="4"/><rect x="5.5" y="7.2" width="0.6" height="0.8"/><path d="M8 7h3v4h-3zM9 8v2h1v-2z" fill-rule="evenodd"/></g></svg>
<div class="t" style="left:350px;top:337px;line-height:19px;height:19px;letter-spacing:0.112px">Audit SAM</div>
<div class="t" style="left:634px;top:337px;line-height:19px;height:19px;letter-spacing:0.254px">Not Configured</div>
<svg style="left:334px;top:356px" width="16" height="16"><path d="M0.5 0.5H10.5L12.5 2.5V14.8L11 13.8L9 13.2L6 12.6L3 12.3L0.5 12.6Z" fill="#ffffff" stroke="#a6a6a6"/><path d="M10.5 0.5V2.5H12.5" fill="#eeeeee" stroke="#b4b4b4"/><path d="M1 12.6L3 12.8L6 13.1L9 13.7L12 15.2" fill="none" stroke="#d0d0d0"/><g fill="#5656dc"><rect x="2" y="2" width="1" height="4"/><rect x="1.5" y="2.2" width="0.6" height="0.8"/><path d="M4 2h3v4h-3zM5 3v2h1v-2z" fill-rule="evenodd"/><rect x="8" y="2" width="1" height="4"/><rect x="7.5" y="2.2" width="0.6" height="0.8"/><path d="M2 7h3v4h-3zM3 8v2h1v-2z" fill-rule="evenodd"/><rect x="6" y="7" width="1" height="4"/><rect x="5.5" y="7.2" width="0.6" height="0.8"/><path d="M8 7h3v4h-3zM9 8v2h1v-2z" fill-rule="evenodd"/></g></svg>
<div class="t" style="left:350px;top:356px;line-height:19px;height:19px;letter-spacing:-0.082px">Audit Central Access Policy Staging</div>
<div class="t" style="left:634px;top:356px;line-height:19px;height:19px;letter-spacing:0.254px">Not Configured</div>

<svg style="left:0;top:0" width="200" height="83" viewBox="0 0 200 83">
 <defs>
  <linearGradient id="gBack" x1="0" y1="0" x2="0" y2="1"><stop offset="0" stop-color="#6cc8f8"/><stop offset="0.5" stop-color="#2ea4ee"/><stop offset="1" stop-color="#1a8ce0"/></linearGradient>
  <linearGradient id="gFwd" x1="0" y1="0" x2="0" y2="1"><stop offset="0" stop-color="#b4b4b4"/><stop offset="0.5" stop-color="#8c8c8c"/><stop offset="1" stop-color="#707070"/></linearGradient>
  <linearGradient id="gHelp" x1="0" y1="0" x2="1" y2="0"><stop offset="0" stop-color="#2846c8"/><stop offset="1" stop-color="#7c8cf0"/></linearGradient>
 </defs>
 <path d="M17.5 66.5L25 59.3V63.2H32.6V69.8H25V73.7Z" fill="url(#gBack)" stroke="#1474c4" stroke-width="1" stroke-linejoin="round"/>
 <path d="M20 66.5L24 62.5V64.5H31V67H24" fill="none" stroke="#9ee0ff" stroke-width="0.8" opacity="0.7"/>
 <path d="M55.5 66.5L48 59.3V63.2H40.4V69.8H48V73.7Z" fill="url(#gFwd)" stroke="#4a4a4a" stroke-width="1" stroke-linejoin="round"/>
 <rect x="60" y="55" width="1" height="22" fill="#a8a8a8"/>
 <!-- up folder -->
 <path d="M72.5 62.5L73.5 61.5H85.5V73.5H72.5Z" fill="#eccb7c" stroke="#c49d4e"/>
 <rect x="80" y="62" width="4.5" height="1.8" rx="0.9" fill="#3a8ae8"/>
 <path d="M72.5 64.5H85.5V73.5H72.5Z" fill="url(#gFold)" stroke="#c49d4e"/>
 <path d="M73 73.5H85.5V65" fill="none" stroke="#b0883a"/>
 <path d="M74.2 70.8C74.6 68.2 76.2 66.3 78.3 64.8" fill="none" stroke="#36c236" stroke-width="2.4" stroke-linecap="round"/>
 <path d="M75.6 64.2L77.6 59.3L81.6 63L78.8 66.2Z" fill="#46d446" stroke="#2aa82a" stroke-width="0.7" stroke-linejoin="round"/>
 <!-- pressed button -->
 <rect x="91.5" y="55.5" width="23" height="22" fill="#ddecfc" stroke="#3a9de0"/>
 <rect x="95.5" y="61.5" width="15" height="12" fill="#ffffff" stroke="#707378"/>
 <rect x="96" y="62" width="14" height="3" fill="#8a8e94"/>
 <rect x="96.5" y="62.8" width="9" height="1" fill="#f4f4f4"/>
 <rect x="106.5" y="62.8" width="1" height="1" fill="#f4f4f4"/>
 <rect x="108.5" y="62.8" width="1" height="1" fill="#f4f4f4"/>
 <rect x="96" y="65" width="14" height="0.8" fill="#c8c8cc"/>
 <rect x="100" y="66" width="1" height="7.5" fill="#707378"/>
 <rect x="97" y="67.2" width="2" height="1" fill="#3a78d0"/>
 <rect x="97" y="69.2" width="2" height="1" fill="#3a78d0"/>
 <rect x="97" y="71.2" width="2" height="1" fill="#3a78d0"/>
 <path d="M102.8 69.5L106.3 67V72Z" fill="#28b428"/>
 <!-- export list -->
 <path d="M125.5 58.5h8.5l3.5 3.5v11.5h-12z" fill="#fdf8dc" stroke="#9a9a9a"/>
 <path d="M134 58.5v3.5h3.5" fill="#ffffff" stroke="#9a9a9a"/>
 <circle cx="128.5" cy="64.5" r="0.8" fill="#222"/><circle cx="128.5" cy="67.5" r="0.8" fill="#222"/><circle cx="128.5" cy="70.5" r="0.8" fill="#222"/>
 <rect x="130" y="64" width="5" height="1" fill="#6a68a8"/><rect x="130" y="67" width="3" height="1" fill="#6a68a8"/><rect x="130" y="70" width="3" height="1" fill="#6a68a8"/>
 <path d="M132.5 66.5h4v-2.3l4.3 3.8-4.3 3.8v-2.3h-4z" fill="#44cc44" stroke="#22a022" stroke-width="0.7"/>
 <rect x="145" y="55" width="1" height="22" fill="#a8a8a8"/>
 <!-- help -->
 <rect x="157.5" y="58.5" width="12" height="15" fill="url(#gHelp)" stroke="#1a2e9a"/>
 <rect x="158" y="59" width="2.6" height="14" fill="#1a32a8"/>
 <rect x="160.6" y="59" width="0.6" height="14" fill="#3050c8"/>
 <path d="M162.6 62.6C162.8 60.6 166.9 60.3 166.9 62.8C166.9 64.8 164.6 65 164.6 67.6" fill="none" stroke="#10208a" stroke-width="1.9" transform="translate(0.6,0.6)" opacity="0.6"/>
 <path d="M162.6 62.6C162.8 60.6 166.9 60.3 166.9 62.8C166.9 64.8 164.6 65 164.6 67.6" fill="none" stroke="#ffffff" stroke-width="1.9"/>
 <rect x="163.6" y="69.4" width="2" height="2" fill="#ffffff"/>
 <!-- show action pane -->
 <rect x="179.5" y="61.5" width="15" height="12" fill="#ffffff" stroke="#707378"/>
 <rect x="180" y="62" width="14" height="3" fill="#8a8e94"/>
 <rect x="180.5" y="62.8" width="9" height="1" fill="#f4f4f4"/>
 <rect x="190.5" y="62.8" width="1" height="1" fill="#f4f4f4"/>
 <rect x="192.5" y="62.8" width="1" height="1" fill="#f4f4f4"/>
 <rect x="180" y="65" width="14" height="0.8" fill="#c8c8cc"/>
 <rect x="189" y="66" width="1" height="7.5" fill="#707378"/>
 <rect x="191" y="67.2" width="2" height="1" fill="#3a78d0"/>
 <rect x="191" y="69.2" width="2" height="1" fill="#3a78d0"/>
 <rect x="191" y="71.2" width="2" height="1" fill="#3a78d0"/>
 <path d="M186.2 69.5L182.8 67V72Z" fill="#28b428"/>
</svg>

<svg style="left:0;top:0" width="790" height="556" viewBox="0 0 790 556">
<rect x="304.5" y="88.5" width="16" height="415" fill="#ffffff" stroke="#d4d4d4"/>
<rect x="304.5" y="88.5" width="16" height="17" fill="#ffffff" stroke="#c4c4c4"/>
<rect x="304.5" y="487.5" width="16" height="16" fill="#ffffff" stroke="#c4c4c4"/>
<rect x="304.5" y="212.5" width="16" height="161" fill="#dadada" stroke="#b8b8b8"/>
<path d="M308.5 288.5h8M308.5 291.5h8M308.5 294.5h8" stroke="#606060" stroke-width="1.4"/>
<path d="M309.1 100.2L312.5 96.7L315.9 100.2" fill="none" stroke="#505050" stroke-width="1.5"/>
<path d="M309.1 493.40000000000003L312.5 496.90000000000003L315.9 493.40000000000003" fill="none" stroke="#505050" stroke-width="1.5"/>
<rect x="304" y="504" width="17" height="17" fill="#f0f0f0"/>
<rect x="17.5" y="504.5" width="286" height="16" fill="#ffffff" stroke="#d4d4d4"/>
<rect x="17.5" y="504.5" width="17" height="16" fill="#ffffff" stroke="#c4c4c4"/>
<rect x="287.5" y="504.5" width="16" height="16" fill="#ffffff" stroke="#c4c4c4"/>
<rect x="35.5" y="504.5" width="129" height="16" fill="#dadada" stroke="#b8b8b8"/>
<path d="M97.5 508.5v8M100.5 508.5v8M103.5 508.5v8" stroke="#606060" stroke-width="1.4"/>
<path d="M27.9 509.1L24.4 512.5L27.9 515.9" fill="none" stroke="#505050" stroke-width="1.5"/>
<path d="M293.6 509.1L297.1 512.5L293.6 515.9" fill="none" stroke="#505050" stroke-width="1.5"/>
<rect x="327.5" y="504.5" width="452" height="16" fill="#ffffff" stroke="#d4d4d4"/>
<rect x="327.5" y="504.5" width="17" height="16" fill="#ffffff" stroke="#c4c4c4"/>
<rect x="763.5" y="504.5" width="16" height="16" fill="#ffffff" stroke="#c4c4c4"/>
<rect x="345.5" y="504.5" width="314" height="16" fill="#dadada" stroke="#b8b8b8"/>
<path d="M499.5 508.5v8M502.5 508.5v8M505.5 508.5v8" stroke="#606060" stroke-width="1.4"/>
<path d="M337.9 509.1L334.4 512.5L337.9 515.9" fill="none" stroke="#505050" stroke-width="1.5"/>
<path d="M769.6 509.1L773.1 512.5L769.6 515.9" fill="none" stroke="#505050" stroke-width="1.5"/>
<rect x="561" y="525" width="1" height="20" fill="#dcdcdc"/>
<rect x="694" y="525" width="1" height="20" fill="#dcdcdc"/>
<rect x="779" y="525" width="1" height="20" fill="#dcdcdc"/>
<rect x="330" y="83" width="2" height="1.3" fill="#202020"/>
<rect x="375" y="83" width="1" height="1.3" fill="#202020"/>
<rect x="450" y="83" width="4" height="1.3" fill="#202020"/>
<rect x="671" y="83" width="4" height="1.3" fill="#202020"/>
<rect x="735" y="83" width="2" height="1.3" fill="#202020"/>
</svg>
</body></html>
